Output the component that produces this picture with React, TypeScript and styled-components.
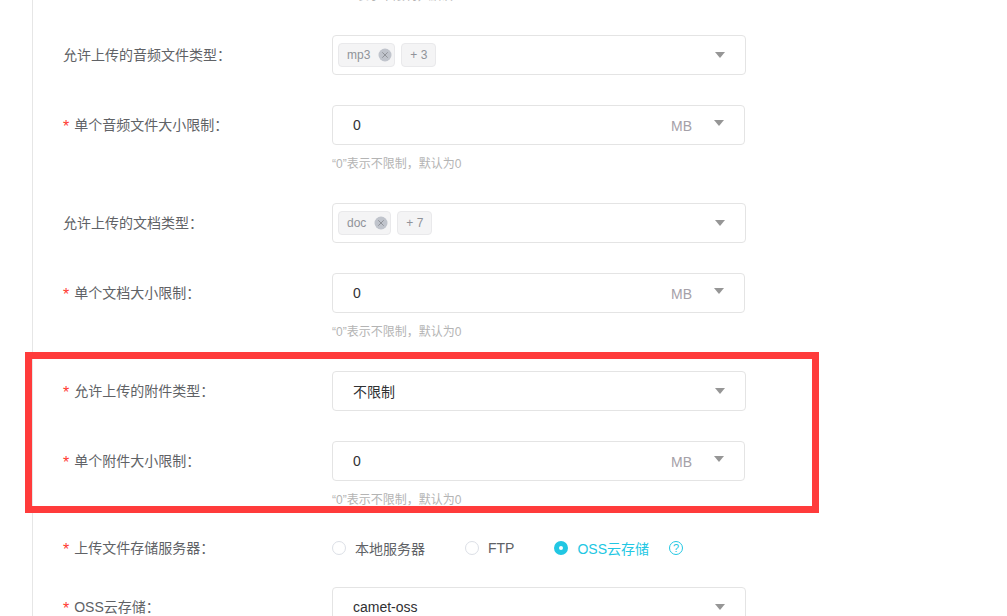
import styled, { createGlobalStyle } from "styled-components";

const GlobalStyle = createGlobalStyle`
  html, body {
    margin: 0;
    padding: 0;
    height: 100%;
    background: #fff;
    overflow: hidden;
  }
  body {
    font-family: "Liberation Sans", "Noto Sans CJK SC", sans-serif;
  }
`;

const Page = styled.div`
  position: relative;
  width: 1007px;
  height: 616px;
  overflow: hidden;
`;

const Panel = styled.div`
  margin-left: 32px;
  padding-left: 30px;
  border-left: 1px solid #e6e6e6;
  width: 713px;
`;

/* tail of the hint above the fold, only its last pixel row shows */
const TopHint = styled.div`
  margin: -12px 0 31px 287px;
  height: 16px;
  line-height: 16px;
  font-size: 12px;
  color: #b4b4b4;
  white-space: nowrap;
`;

const Row = styled.div<{ $flat?: boolean }>`
  display: flex;
  align-items: flex-start;
  margin-bottom: 30px;
  height: ${(p) => (p.$flat ? "18px" : "auto")};
`;

const Label = styled.div<{ $flat?: boolean }>`
  width: 269px;
  flex: none;
  line-height: ${(p) => (p.$flat ? "18px" : "40px")};
  font-size: 14px;
  color: #606266;
  white-space: nowrap;
`;

const Star = styled.span`
  color: #ff3b30;
  margin-right: 5px;
  font-size: 16px;
  line-height: 1;
  vertical-align: -2px;
`;

const Control = styled.div`
  width: 414px;
  flex: none;
`;

const Box = styled.div<{ $narrow?: boolean }>`
  box-sizing: border-box;
  height: 40px;
  width: ${(p) => (p.$narrow ? "413px" : "414px")};
  border: 1px solid #e4e4e4;
  border-radius: 4px;
  display: flex;
  align-items: center;
  background: #fff;
`;

const Value = styled.div`
  flex: 1;
  padding-left: 20px;
  font-size: 14px;
  color: #303133;
`;

const Tags = styled.div`
  flex: 1;
  display: flex;
  align-items: center;
  gap: 6px;
  padding-left: 5px;
`;

const Tag = styled.span`
  box-sizing: border-box;
  height: 24px;
  display: inline-flex;
  align-items: center;
  padding: 0 2px 0 8px;
  gap: 8px;
  background: #f4f4f5;
  border: 1px solid #e9e9eb;
  border-radius: 4px;
  font-size: 12px;
  color: #909399;
`;

const CountTag = styled(Tag)`
  padding: 0 8px;
`;

const TagClose = styled.svg`
  width: 14px;
  height: 14px;
  flex: none;
`;

const Unit = styled.span`
  font-size: 14px;
  color: #a5a1a8;
  margin: 2px 22px 0 0;
`;

const Arrow = styled.i<{ $raised?: boolean }>`
  display: block;
  width: 0;
  height: 0;
  border-left: 5px solid transparent;
  border-right: 5px solid transparent;
  border-top: 6px solid #969696;
  margin-right: 20px;
  margin-top: ${(p) => (p.$raised ? "-4px" : "0")};
`;

const Hint = styled.div`
  height: 28px;
  padding-top: 11px;
  box-sizing: border-box;
  line-height: 16px;
  font-size: 12px;
  color: #b4b4b4;
`;

const Radios = styled.div`
  display: flex;
  align-items: center;
  height: 18px;
`;

const Radio = styled.label<{ $on?: boolean }>`
  display: inline-flex;
  align-items: center;
  gap: 9px;
  margin-right: 40px;
  font-size: 14px;
  color: ${(p) => (p.$on ? "#22c7e3" : "#606266")};
`;

const RadioDot = styled.span<{ $on?: boolean }>`
  box-sizing: border-box;
  width: 14px;
  height: 14px;
  border-radius: 50%;
  border: ${(p) => (p.$on ? "5px solid #22c7e3" : "1px solid #dcdfe6")};
  background: #fff;
`;

const Help = styled.span`
  box-sizing: border-box;
  width: 14px;
  height: 14px;
  border: 1px solid #22c7e3;
  border-radius: 50%;
  color: #22c7e3;
  font-size: 11px;
  line-height: 12px;
  text-align: center;
  margin-left: -20px;
`;

const Highlight = styled.div`
  position: absolute;
  left: 25px;
  top: 352px;
  width: 794px;
  height: 161px;
  box-sizing: border-box;
  border: 7px solid #ff3b3b;
  pointer-events: none;
`;

const HINT = "“0”表示不限制，默认为0";

const CloseIcon = () => (
  <TagClose viewBox="0 0 14 14">
    <circle cx="7" cy="7" r="6.5" fill="#c0c4cc" />
    <path d="M4.3 4.3l5.4 5.4M9.7 4.3l-5.4 5.4" stroke="#909399" strokeWidth="1" fill="none" />
  </TagClose>
);

const NumberRow = ({ label }: { label: string }) => (
  <Row>
    <Label>
      <Star>*</Star>
      {label}
    </Label>
    <Control>
      <Box $narrow>
        <Value>0</Value>
        <Unit>MB</Unit>
        <Arrow $raised />
      </Box>
      <Hint>{HINT}</Hint>
    </Control>
  </Row>
);

const TagRow = ({ label, tag, more }: { label: string; tag: string; more: string }) => (
  <Row>
    <Label>{label}</Label>
    <Control>
      <Box>
        <Tags>
          <Tag>
            {tag}
            <CloseIcon />
          </Tag>
          <CountTag>{more}</CountTag>
        </Tags>
        <Arrow />
      </Box>
    </Control>
  </Row>
);

const SelectRow = ({ label, value }: { label: string; value: string }) => (
  <Row>
    <Label>
      <Star>*</Star>
      {label}
    </Label>
    <Control>
      <Box>
        <Value>{value}</Value>
        <Arrow />
      </Box>
    </Control>
  </Row>
);

export default function App() {
  return (
    <Page>
      <GlobalStyle />
      <Panel>
        <TopHint>0表示不限制，默认</TopHint>
        <TagRow label="允许上传的音频文件类型：" tag="mp3" more="+ 3" />
        <NumberRow label="单个音频文件大小限制：" />
        <TagRow label="允许上传的文档类型：" tag="doc" more="+ 7" />
        <NumberRow label="单个文档大小限制：" />
        <SelectRow label="允许上传的附件类型：" value="不限制" />
        <NumberRow label="单个附件大小限制：" />
        <Row $flat>
          <Label $flat>
            <Star>*</Star>
            上传文件存储服务器：
          </Label>
          <Radios>
            <Radio>
              <RadioDot />
              本地服务器
            </Radio>
            <Radio>
              <RadioDot />
              FTP
            </Radio>
            <Radio $on>
              <RadioDot $on />
              OSS云存储
            </Radio>
            <Help>?</Help>
          </Radios>
        </Row>
        <SelectRow label="OSS云存储：" value="camet-oss" />
      </Panel>
      <Highlight />
    </Page>
  );
}
